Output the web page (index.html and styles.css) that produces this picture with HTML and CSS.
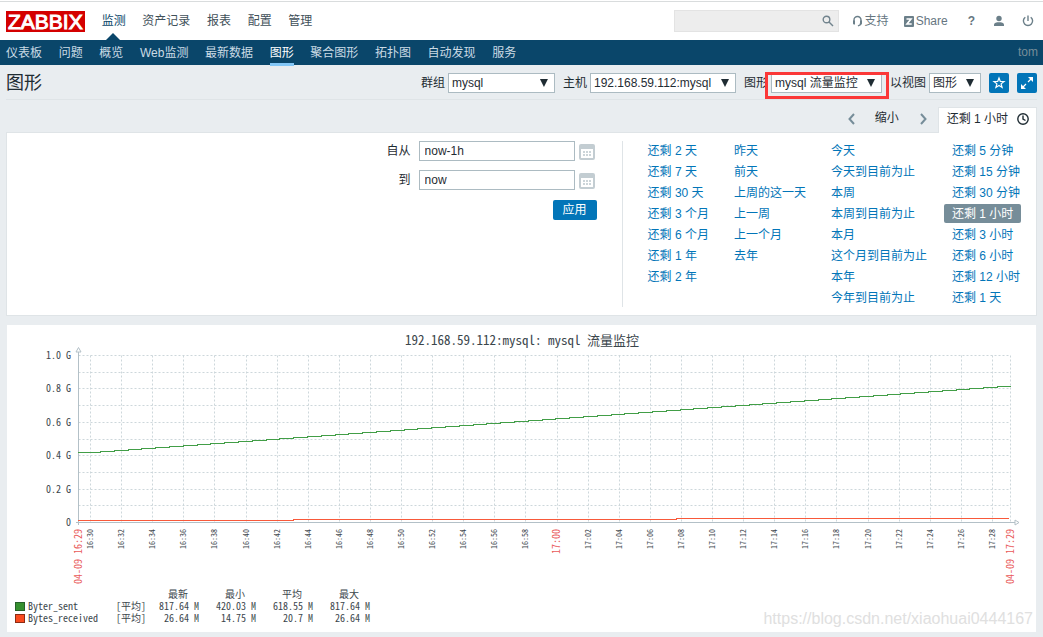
FILE: index.html
```html
<!DOCTYPE html>
<html lang="zh-CN">
<head>
<meta charset="utf-8">
<title>图形</title>
<link rel="stylesheet" href="styles.css">
</head>
<body>
<header class="top">
  <a class="logo" href="#">ZABBIX</a>
  <nav class="menu">
    <a class="active" href="#">监测</a>
    <a href="#">资产记录</a>
    <a href="#">报表</a>
    <a href="#">配置</a>
    <a href="#">管理</a>
  </nav>
  <form class="search">
    <input type="text" aria-label="搜索">
    <button type="button" aria-label="搜索"><svg width="12" height="12" viewBox="0 0 12 12"><circle cx="4.5" cy="4.5" r="3.3"/><path d="M7 7l4 4"/></svg></button>
  </form>
  <div class="tools">
    <a class="support" href="#"><svg width="11" height="12" viewBox="0 0 11 12"><path class="line" d="M2 8V5a3.500 3.500 0 0 1 7 0v3M8.500 8v1.500L6 11"/><path d="M1 5.500h2v4H2A1 1 0 0 1 1 8.500zM10 5.500H8v4h1a1 1 0 0 0 1-1z"/></svg>支持</a>
    <a class="share" href="#"><svg width="10" height="11" viewBox="0 0 10 11"><rect width="10" height="11" rx="1"/><path class="zed" d="M2.500 3h4.500L3 8h4.700"/></svg>Share</a>
    <a class="help" href="#">?</a>
    <a class="user" href="#" aria-label="用户"><svg width="12" height="12" viewBox="0 0 12 12"><circle cx="6" cy="3.500" r="2.700"/><path d="M1 11V9.500C1 7.800 3.500 7.300 6 7.300s5 .5 5 2.200V11z"/></svg></a>
    <a class="power" href="#" aria-label="退出"><svg width="12" height="12" viewBox="0 0 12 12"><path class="line" d="M3.300 2.200a4.600 4.600 0 1 0 5.400 0M6 .5v5.500"/></svg></a>
  </div>
</header>
<nav class="submenu">
  <div class="links">
    <a href="#">仪表板</a>
    <a href="#">问题</a>
    <a href="#">概览</a>
    <a href="#">Web监测</a>
    <a href="#">最新数据</a>
    <a class="active" href="#">图形</a>
    <a href="#">聚合图形</a>
    <a href="#">拓扑图</a>
    <a href="#">自动发现</a>
    <a href="#">服务</a>
  </div>
  <span class="who">tom</span>
</nav>
<main class="page">
  <div class="heading">
    <h1>图形</h1>
    <div class="filters">
      <div class="field"><label for="group">群组</label><span class="pick group"><select id="group"><option>mysql</option></select></span></div>
      <div class="field"><label for="host">主机</label><span class="pick host"><select id="host"><option>192.168.59.112:mysql</option></select></span></div>
      <div class="field"><label for="graph">图形</label><span class="pick graph marked"><select id="graph"><option>mysql 流量监控</option></select></span></div>
      <div class="field"><label for="view">以视图</label><span class="pick view"><select id="view"><option>图形</option></select></span></div>
      <button class="icon" type="button" aria-label="收藏"><svg width="14" height="14" viewBox="0 0 14 14"><path d="M7 2l1.300 3.500 3.700.1-2.900 2.300 1 3.600L7 9.500l-3.100 2 1-3.600L2 5.600l3.700-.1z"/></svg></button>
      <button class="icon" type="button" aria-label="全屏"><svg width="14" height="14" viewBox="0 0 14 14"><path class="solid" d="M8 1h5v5zM1 8v5h5z"/><path d="M8 6l3-3M6 8l-3 3"/></svg></button>
    </div>
  </div>
  <div class="range">
    <button class="arrow" type="button" aria-label="向前"><svg width="7" height="12" viewBox="0 0 7 12"><path d="M6 1L1.500 6 6 11"/></svg></button>
    <button class="zoomout" type="button">缩小</button>
    <button class="arrow" type="button" aria-label="向后"><svg width="7" height="12" viewBox="0 0 7 12"><path d="M1 1l4.500 5L1 11"/></svg></button>
    <a class="tab" href="#">还剩 1 小时<svg width="12" height="12" viewBox="0 0 12 12"><circle cx="6" cy="6" r="5.200"/><path d="M6 2.500V6l2.500 1.500"/></svg></a>
  </div>
  <section class="panel">
    <form class="period">
      <label for="from">自从</label><input id="from" type="text" value="now-1h"><button class="cal" type="button" aria-label="日历"><svg width="16" height="16" viewBox="0 0 16 16"><rect x="1" y="1" width="14" height="14" rx="1"/><path class="bar" d="M1 1h14v4H1z"/><path class="dots" d="M4 8h9M4 11h9"/></svg></button>
      <label for="to">到</label><input id="to" type="text" value="now"><button class="cal" type="button" aria-label="日历"><svg width="16" height="16" viewBox="0 0 16 16"><rect x="1" y="1" width="14" height="14" rx="1"/><path class="bar" d="M1 1h14v4H1z"/><path class="dots" d="M4 8h9M4 11h9"/></svg></button>
      <button class="apply" type="button">应用</button>
    </form>
    <div class="presets">
      <div class="col"><a href="#">还剩 2 天</a><a href="#">还剩 7 天</a><a href="#">还剩 30 天</a><a href="#">还剩 3 个月</a><a href="#">还剩 6 个月</a><a href="#">还剩 1 年</a><a href="#">还剩 2 年</a></div>
      <div class="col"><a href="#">昨天</a><a href="#">前天</a><a href="#">上周的这一天</a><a href="#">上一周</a><a href="#">上一个月</a><a href="#">去年</a></div>
      <div class="col"><a href="#">今天</a><a href="#">今天到目前为止</a><a href="#">本周</a><a href="#">本周到目前为止</a><a href="#">本月</a><a href="#">这个月到目前为止</a><a href="#">本年</a><a href="#">今年到目前为止</a></div>
      <div class="col"><a href="#">还剩 5 分钟</a><a href="#">还剩 15 分钟</a><a href="#">还剩 30 分钟</a><a class="chosen" href="#">还剩 1 小时</a><a href="#">还剩 3 小时</a><a href="#">还剩 6 小时</a><a href="#">还剩 12 小时</a><a href="#">还剩 1 天</a></div>
    </div>
  </section>
  <section class="chart">
    <svg id="plot" class="plot" viewBox="0 0 1029 263">
      <text class="title" x="515" y="20">192.168.59.112:mysql: mysql 流量监控</text>
    </svg>
    <table class="legend">
      <thead><tr><td></td><td></td><th>最新</th><th>最小</th><th>平均</th><th>最大</th></tr></thead>
      <tbody>
        <tr><th><i class="swatch sent"></i>Byter_sent</th><td>[平均]</td><td>817.64 M</td><td>420.03 M</td><td>618.55 M</td><td>817.64 M</td></tr>
        <tr><th><i class="swatch received"></i>Bytes_received</th><td>[平均]</td><td>26.64 M</td><td>14.75 M</td><td>20.7 M</td><td>26.64 M</td></tr>
      </tbody>
    </table>
    <span class="watermark">https://blog.csdn.net/xiaohuai0444167</span>
  </section>
</main>
<script src="chart.js"></script>
</body>
</html>
```
FILE: styles.css
```css
* { box-sizing: border-box; }
body {
  margin: 0;
  background: #e9edf0;
  color: #1f2c33;
  font: 12px/16px "Liberation Sans", "Noto Sans CJK SC", sans-serif;
}
a { color: inherit; text-decoration: none; }
svg { display: block; flex: none; }
button, input, select { font: inherit; color: inherit; border-radius: 0; margin: 0; }
button { border: 0; padding: 0; background: none; }

.top {
  display: flex;
  align-items: center;
  height: 40px;
  padding: 2px 9px 0 6px;
  background: #fff;
  box-shadow: inset 0 1px #fff, inset 0 2px #d9dcdd;
}
.logo {
  height: 21px;
  padding: 0 2px;
  background: #d40000;
  color: #fff;
  font-size: 21px;
  line-height: 22px;
  -webkit-text-stroke: 1px #fff;
}
.menu { align-self: stretch; margin-left: 10px; font-size: 13px; line-height: 38px; color: #3f5059; }
.menu a { position: relative; display: inline-block; padding: 0 6px 0 7px; font-size: 12px; }
.menu .active { color: #0a466a; }
.menu .active::after {
  content: "";
  position: absolute;
  left: 50%;
  bottom: 0;
  margin-left: -7px;
  border: 7px solid transparent;
  border-top-width: 0;
  border-bottom-color: #0a466a;
}
.search { display: flex; width: 165px; height: 22px; margin-left: auto; background: #ededed; border: 1px solid #e3e3e3; }
.search input { flex: 1; min-width: 0; border: 0; background: none; }
.search button { width: 20px; padding-left: 4px; }
.search svg { fill: none; stroke: #71838d; stroke-width: 1.4; }
.tools { display: flex; align-items: center; color: #66767f; margin-left: 13px; line-height: 14px; }
.tools a { display: flex; align-items: center; gap: 2px; }
.tools svg { fill: #6b7f89; }
.tools .line { fill: none; stroke: #6b7f89; stroke-width: 1.4; }
.tools .zed { fill: none; stroke: #fff; stroke-width: 1.6; }
.share { margin-left: 15px; }
.help { margin-left: 20px; font-weight: bold; }
.user { margin-left: 18px; }
.power { margin-left: 17px; }

.submenu { display: flex; justify-content: space-between; height: 25px; padding: 0 5px 0 6px; background: #0a466a; color: #cbdbe5; }
.links { font-size: 13px; line-height: 25px; margin-left: -7px; }
.links a { display: inline-block; height: 25px; padding: 0 6px 0 7px; font-size: 12px; line-height: 24px; }
.links .active { color: #fff; background: linear-gradient(#83c7f7, #83c7f7) 7px 100% / 24px 3px no-repeat; }
.who { color: #768d99; line-height: 24px; }

.page { padding: 0 6px 5px; }
.heading { display: flex; align-items: flex-start; justify-content: space-between; height: 35px; padding-top: 8px; border-bottom: 1px solid #dfe4e7; }
h1 { margin: 0; font-size: 18px; line-height: 20px; font-weight: normal; }
.filters { display: flex; gap: 8px; }
.field { display: flex; gap: 3px; line-height: 20px; }
.pick { position: relative; display: block; height: 20px; }
.pick select { appearance: none; display: block; width: 100%; height: 20px; padding: 0 3px; border: 1px solid #acbbc2; background: #fff; line-height: 18px; }
.pick::after { content: ""; position: absolute; right: 7px; top: 6px; width: 8px; height: 8px; background: #1f2c33; clip-path: polygon(0 0, 100% 0, 50% 100%); pointer-events: none; }
.group { width: 107px; }
.host { width: 146px; }
.graph { width: 111px; }
.view { width: 52px; }
.marked::before { content: ""; position: absolute; inset: -1px -7px -6px -6px; border: 3px solid #fb3838; z-index: 1; pointer-events: none; }
.icon { display: grid; place-items: center; width: 20px; height: 20px; background: #0275b8; border-radius: 2px; }
.icon svg { fill: none; stroke: #fff; stroke-width: 1.2; }
.icon .solid { fill: #fff; stroke: none; }

.range { display: flex; align-items: center; justify-content: flex-end; padding-top: 7px; }
.arrow { padding: 0 2px 2px; }
.arrow svg { fill: none; stroke: #768d99; stroke-width: 2; }
.zoomout { margin: 0 19px 0 18px; padding-bottom: 3px; }
.range .tab { display: flex; align-items: center; gap: 9px; height: 26px; margin: 0 0 -1px 9px; padding: 0 7px 4px 8px; background: #fff; border: 1px solid #dfe4e7; border-bottom: 0; z-index: 1; }
.tab svg { fill: none; stroke: #1f2c33; stroke-width: 1.4; }

.panel { display: flex; padding: 8px 0; border: 1px solid #dfe4e7; background: #fff; }
.period { flex: 1; display: grid; grid-template-columns: auto 156px 22px; justify-content: end; align-content: start; row-gap: 9px; padding-right: 25px; border-right: 1px solid #dfe4e7; }
.period label { padding-right: 8px; text-align: right; line-height: 20px; }
.period input { width: 156px; height: 20px; padding: 0 5px; border: 1px solid #acbbc2; background: #fff; }
.cal { padding: 2px 0 0 4px; height: 20px; }
.cal svg { fill: #fff; stroke: #c3cdd2; stroke-width: 2; }
.cal .bar { fill: #c3cdd2; stroke: none; }
.cal .dots { stroke-dasharray: 2 1; stroke: #ccd5d9; }
.apply { grid-column: 1 / -1; justify-self: end; width: 44px; height: 20px; margin-top: 1px; background: #0275b8; border-radius: 2px; color: #fff; }
.presets { display: flex; gap: 9px; padding: 0 8px 0 17px; }
.col { display: flex; flex-direction: column; align-items: flex-start; gap: 2px; color: #0275b8; }
.col a { padding: 2px 8px 0; line-height: 17px; white-space: nowrap; }
.col .chosen { background: #768d99; color: #fff; border-radius: 2px; }

.chart { position: relative; margin: 9px 1px 0; padding-bottom: 8px; background: #fff; font-family: "Noto Sans Mono CJK SC", "Liberation Mono", monospace; color: #3b464c; }
.plot { width: 100%; height: auto; }
.plot text { font-size: 10px; fill: #3b464c; }
.plot .title { font-size: 13px; text-anchor: middle; }
.plot .value { text-anchor: end; }
.plot .time { font-size: 8px; text-anchor: end; }
.plot .date { font-size: 10px; text-anchor: end; fill: #e95a5a; }
.grid { stroke: #cdd7db; stroke-dasharray: 2 2; fill: none; }
.axis { stroke: #b3c0c7; fill: none; }
.tip { stroke: #b3c0c7; fill: #fff; }
.sent-line { stroke: #429e47; fill: none; shape-rendering: crispEdges; }
.received-line { stroke: #f8593a; fill: none; shape-rendering: crispEdges; }
.legend { margin-left: 8px; border-collapse: collapse; font-size: 10px; line-height: 12px; white-space: nowrap; }
.legend th, .legend td { padding: 0; height: 12px; font-weight: normal; text-align: right; }
.legend thead th { width: 57px; padding-right: 11px; }
.legend thead th:nth-child(3) { width: 53px; }
.legend tbody th { width: 101px; text-align: left; }
.legend td:nth-child(2) { width: 28px; }
.swatch { display: inline-block; width: 10px; height: 9px; margin-right: 3px; vertical-align: -1px; border: 1px solid #26602a; background: #35902f; }
.received { background: #fa4a1e; border-color: #8c2c14; }
.watermark { position: absolute; right: 3px; bottom: 4px; color: #e0e0e0; font: 16px/18px "Liberation Sans", sans-serif; }
```
FILE: chart.js
```js
const plot = document.getElementById('plot');
const LEFT = 71.5, RIGHT = 1003.5, TOP = 30.5, BOTTOM = 197.5;

function add(name, attrs, text) {
  const el = document.createElementNS('http://www.w3.org/2000/svg', name);
  for (const key in attrs) el.setAttribute(key, attrs[key]);
  if (text) el.textContent = text;
  plot.appendChild(el);
}
function vertical(cls, x, text) {
  add('text', { class: cls, transform: `translate(${x} 204) rotate(-90)` }, text);
}

for (let i = 0; i < 10; i++) {
  const y = Math.round(30 + i * 16.7) + 0.5;
  add('path', { class: 'grid', d: `M${LEFT} ${y}H${RIGHT}` });
}
['1.0 G', '0.8 G', '0.6 G', '0.4 G', '0.2 G', '0'].forEach((label, i) => {
  add('text', { class: 'value', x: 64, y: Math.round(34 + i * 33.4) }, label);
});
for (let i = 0; i < 30; i++) {
  const x = Math.round(83 + i * 31.1) + 0.5;
  const minute = 30 + i * 2;
  const label = `${16 + Math.floor(minute / 60)}:${String(minute % 60).padStart(2, '0')}`;
  add('path', { class: 'grid', d: `M${x} ${TOP}V${BOTTOM}` });
  vertical(i === 15 ? 'date' : 'time', x + 2, label);
}
add('path', { class: 'grid', d: `M${RIGHT} ${TOP}V${BOTTOM}` });
vertical('date', 75, '04-09 16:29');
vertical('date', 1007, '04-09 17:29');

add('path', { class: 'axis', d: `M${LEFT} 27V200M69 ${BOTTOM}H1008` });
add('path', { class: 'tip', d: 'M69 27L71.5 22.5L74 27Z' });
add('path', { class: 'tip', d: 'M1008 195L1012 197.5L1008 200Z' });

let sent = 'M71 127.500H93';
for (let y = 126.5, i = 1; y >= 61.5; y -= 1, i++) sent += `V${y}H${Math.round(93 + i * 13.8)}`;
add('path', { class: 'sent-line', d: sent });
add('path', { class: 'received-line', d: 'M71 195.500H286V194.500H669V193.500H1002' });
```
